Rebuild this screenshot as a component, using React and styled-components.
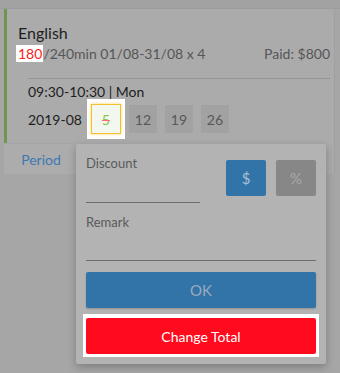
import React from "react";
import styled, { createGlobalStyle } from "styled-components";

const Global = createGlobalStyle`
  html, body { margin: 0; padding: 0; }
  body {
    background: #a6a6a6;
    font-family: Lato, "Noto Sans", sans-serif;
    width: 340px;
    height: 373px;
    overflow: hidden;
  }
`;

const Page = styled.div`
  position: relative;
  width: 340px;
  height: 373px;
  background: #a6a6a6;
`;

const TopStrip = styled.div`
  height: 8px;
  background: #a2a2a2;
  border-bottom: 1px solid #9c9c9c;
`;

const Card = styled.div`
  margin-left: 4px;
  width: 331px;
  box-sizing: border-box;
  background: #ababab;
  border-left: 3px solid #6f9550;
  border-right: 1px solid #a0a0a0;
  display: flex;
  flex-direction: column;
`;

const Body = styled.div`
  padding: 14px 4px 0 11px;
  display: flex;
  flex-direction: column;
`;

const Title = styled.div`
  font-size: 16px;
  color: #1e1e1e;
  line-height: 20px;
`;

const InfoRow = styled.div`
  display: flex;
  justify-content: space-between;
  font-size: 14px;
  color: #565656;
  line-height: 20px;
  margin-top: 1px;
`;

const Used = styled.span`
  background: #ffffff;
  color: #ff1a1a;
  padding: 0 1px 0 2px;
  margin-left: -2px;
`;

const Schedule = styled.div`
  margin: 14px 0 0 10px;
  border-top: 1px solid #959595;
  padding-top: 4px;
  display: flex;
  flex-direction: column;
`;

const TimeLine = styled.div`
  font-size: 14px;
  color: #1e1e1e;
  line-height: 18px;
`;

const DateRow = styled.div`
  display: flex;
  align-items: center;
  gap: 8px;
  margin-top: 3px;
  margin-bottom: 9px;
`;

const Month = styled.div`
  font-size: 14px;
  color: #1e1e1e;
  margin-right: 1px;
`;

const HighlightBox = styled.div`
  background: #ffffff;
  padding: 5px 4px;
  margin: -5px -4px;
`;

const Cell = styled.div`
  width: ${(p) => (p.$active ? 30 : 28)}px;
  height: ${(p) => (p.$active ? 30 : 28)}px;
  box-sizing: border-box;
  display: flex;
  align-items: center;
  justify-content: center;
  font-size: 14px;
  color: ${(p) => (p.$active ? "#8bc34a" : "#585858")};
  background: ${(p) => (p.$active ? "#f2f8ee" : "#a2a2a2")};
  border: ${(p) => (p.$active ? "1px solid #f6bf2e" : "none")};
  box-shadow: ${(p) => (p.$active ? "0 0 3px rgba(246,191,46,0.7)" : "none")};
  text-decoration: ${(p) => (p.$active ? "line-through #ff6b7a" : "none")};
`;

const Tabs = styled.div`
  display: flex;
  height: 31px;
`;

const Tab = styled.div`
  width: 68px;
  margin-left: -3px;
  padding-left: 3px;
  background: #acacac;
  border-top: 1px solid #a4a4a4;
  display: flex;
  align-items: center;
  justify-content: center;
  font-size: 14px;
  color: #3c78b2;
  border-radius: 0 3px 0 0;
`;

const Popup = styled.div`
  position: absolute;
  left: 76px;
  top: 144px;
  width: 250px;
  box-sizing: border-box;
  background: #b3b3b3;
  border-radius: 2px;
  box-shadow: 0 3px 8px rgba(0, 0, 0, 0.25);
  padding: 10px 10px 7px;
  display: flex;
  flex-direction: column;
`;

const DiscountRow = styled.div`
  display: flex;
  align-items: flex-start;
`;

const Field = styled.div`
  display: flex;
  flex-direction: column;
  width: ${(p) => p.$width};
`;

const Label = styled.div`
  font-size: 13px;
  color: #5a5a5a;
  line-height: 16px;
  margin-top: 1px;
`;

const Underline = styled.div`
  height: ${(p) => p.$h}px;
  border-bottom: 1px solid #6c6c6c;
`;

const UnitButtons = styled.div`
  display: flex;
  gap: 10px;
  margin-left: auto;
  margin-top: 6px;
`;

const UnitButton = styled.div`
  width: 40px;
  height: 36px;
  border-radius: 2px;
  display: flex;
  align-items: center;
  justify-content: center;
  font-size: 15px;
  background: ${(p) => (p.$on ? "#3273a8" : "#878787")};
  color: ${(p) => (p.$on ? "#a9c0d6" : "#a9a9a9")};
`;

const RemarkField = styled.div`
  margin-top: 10px;
  display: flex;
  flex-direction: column;
`;

const Wide = styled.div`
  height: 36px;
  border-radius: 2px;
  display: flex;
  align-items: center;
  justify-content: center;
  font-size: 14px;
`;

const OkButton = styled(Wide)`
  margin-top: 11px;
  background: #3273a8;
  color: #9aabbd;
  font-size: 15px;
  box-shadow: 0 1px 2px rgba(0, 0, 0, 0.2);
`;

const ChangeWrap = styled.div`
  margin: 6px -3px 0;
  padding: 4px 3px 3px;
  background: #ffffff;
`;

const ChangeButton = styled(Wide)`
  background: #ff0b1d;
  color: #ffffff;
`;

export default function App() {
  return (
    <Page>
      <Global />
      <TopStrip />
      <Card>
        <Body>
          <Title>English</Title>
          <InfoRow>
            <span>
              <Used>180</Used>/240min 01/08-31/08 x 4
            </span>
            <span>Paid: $800</span>
          </InfoRow>
          <Schedule>
            <TimeLine>09:30-10:30 | Mon</TimeLine>
            <DateRow>
              <Month>2019-08</Month>
              <HighlightBox>
                <Cell $active>5</Cell>
              </HighlightBox>
              <Cell>12</Cell>
              <Cell>19</Cell>
              <Cell>26</Cell>
            </DateRow>
          </Schedule>
        </Body>
        <Tabs>
          <Tab>Period</Tab>
        </Tabs>
      </Card>
      <Popup>
        <DiscountRow>
          <Field $width="114px">
            <Label>Discount</Label>
            <Underline $h={31} />
          </Field>
          <UnitButtons>
            <UnitButton $on>$</UnitButton>
            <UnitButton>%</UnitButton>
          </UnitButtons>
        </DiscountRow>
        <RemarkField>
          <Label>Remark</Label>
          <Underline $h={30} />
        </RemarkField>
        <OkButton>OK</OkButton>
        <ChangeWrap>
          <ChangeButton>Change Total</ChangeButton>
        </ChangeWrap>
      </Popup>
    </Page>
  );
}
